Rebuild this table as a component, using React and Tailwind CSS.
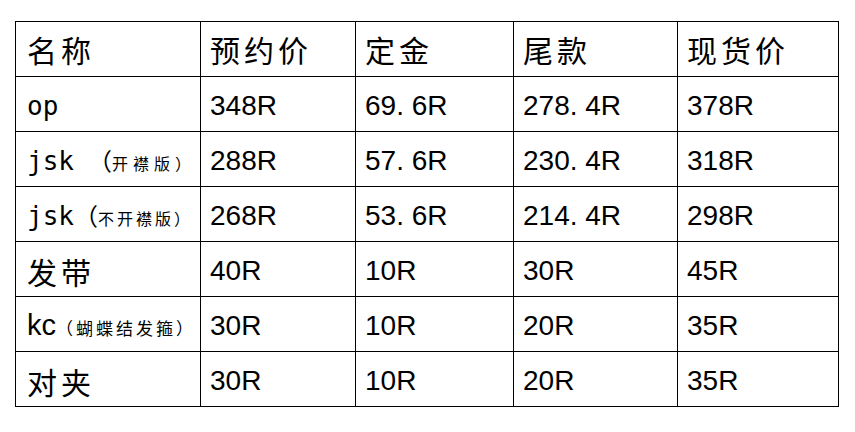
import React from "react";

const cjk = "font-['Noto_Sans_CJK_SC',sans-serif]";
const num = "font-['Liberation_Sans','Noto_Sans_CJK_SC',sans-serif]";
const mono = "font-['DejaVu_Sans_Mono',monospace]";

const headers = ["名称", "预约价", "定金", "尾款", "现货价"];

const rows = [
  { name: <span className={`${mono} text-[26px]`}>op</span>, cells: ["348R", "69. 6R", "278. 4R", "378R"] },
  {
    name: (
      <>
        <span className={`${mono} text-[26px]`}>jsk</span>
        <span className={`${cjk} text-[24px] ml-[14px]`}>（</span>
        <span className={`${cjk} text-[16px] tracking-[5px]`}>开襟版）</span>
      </>
    ),
    cells: ["288R", "57. 6R", "230. 4R", "318R"],
  },
  {
    name: (
      <>
        <span className={`${mono} text-[26px]`}>jsk</span>
        <span className={`${cjk} text-[24px]`}>（</span>
        <span className={`${cjk} text-[16px] tracking-[3px]`}>不开襟版）</span>
      </>
    ),
    cells: ["268R", "53. 6R", "214. 4R", "298R"],
  },
  { name: <span className={`${cjk} text-[30px] tracking-[4px]`}>发带</span>, cells: ["40R", "10R", "30R", "45R"] },
  {
    name: (
      <>
        <span className={`${num} text-[29px]`}>kc</span>
        <span className={`${cjk} text-[17px] tracking-[3px]`}>（蝴蝶结发箍）</span>
      </>
    ),
    cells: ["30R", "10R", "20R", "35R"],
  },
  { name: <span className={`${cjk} text-[30px] tracking-[4px]`}>对夹</span>, cells: ["30R", "10R", "20R", "35R"] },
];

function Cell({ children, first }) {
  return (
    <div
      className={`h-[55px] border-r border-b border-black flex items-center whitespace-nowrap ${
        first ? "pl-[11px]" : "pl-[9px]"
      }`}
    >
      {children}
    </div>
  );
}

export default function App() {
  return (
    <div className="w-[855px] h-[432px] bg-white text-black pt-[21px] pl-[15px]">
      <div className="grid grid-cols-[185px_155px_158px_164px_161px] border-l border-t border-black w-fit">
        {headers.map((h, i) => (
          <Cell key={h} first={i === 0}>
            <span className={`${cjk} text-[30px] tracking-[4px] leading-none`}>{h}</span>
          </Cell>
        ))}
        {rows.map((r, ri) => (
          <React.Fragment key={ri}>
            <Cell first>
              <div className="flex items-baseline pt-[4px]">{r.name}</div>
            </Cell>
            {r.cells.map((c, ci) => (
              <Cell key={ci}>
                <span className={`${num} text-[28px] pt-[4px]`}>{c}</span>
              </Cell>
            ))}
          </React.Fragment>
        ))}
      </div>
    </div>
  );
}
